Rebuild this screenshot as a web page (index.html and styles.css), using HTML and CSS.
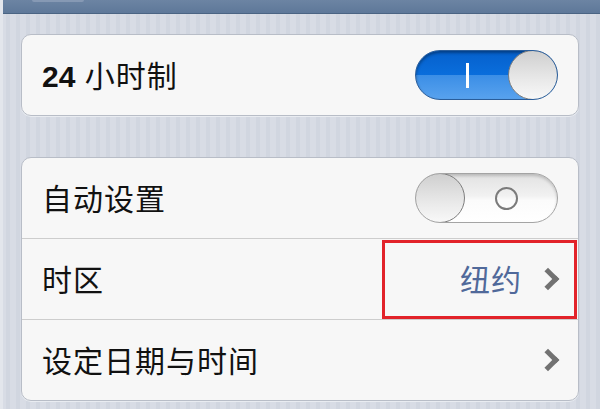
FILE: index.html
```html
<!DOCTYPE html>
<html lang="zh-CN">

<head>
    <meta charset="UTF-8">
    <meta name="viewport" content="width=device-width, initial-scale=1.0">
    <title>日期与时间</title>
    <link rel="stylesheet" href="styles.css">
</head>

<body>
    <!-- Navigation bar (cut off at the top) -->
    <div class="nav-bar">
        <span class="nav-btn"></span>
    </div>

    <div class="content">
        <!-- 24 hour group -->
        <div class="group">
            <div class="cell">
                <span class="label"><b>24</b> 小时制</span>
                <span class="switch on">
                    <span class="mark-on"></span>
                    <span class="knob"></span>
                </span>
            </div>
        </div>

        <!-- Time zone group -->
        <div class="group">
            <div class="cell">
                <span class="label">自动设置</span>
                <span class="switch off">
                    <span class="knob"></span>
                    <span class="mark-off"></span>
                </span>
            </div>
            <div class="cell">
                <span class="label">时区</span>
                <span class="detail">纽约</span>
                <span class="chevron"></span>
                <span class="highlight"></span>
            </div>
            <div class="cell">
                <span class="label">设定日期与时间</span>
                <span class="chevron"></span>
            </div>
        </div>
    </div>
</body>

</html>
```

FILE: styles.css
```css
body {
    margin: 0;
    width: 600px;
    height: 409px;
    overflow: hidden;
    font-family: "Liberation Sans", "Noto Sans CJK SC", sans-serif;
    background-color: #d5dae3;
    background-image: repeating-linear-gradient(90deg, #d8dce5 0, #d8dce5 6px, #d1d6e0 6px, #d1d6e0 10px);
    border-left: 3px solid #e3e6ec;
    box-sizing: border-box;
}

.nav-bar {
    height: 14px;
    background: linear-gradient(#6c84a3, #5e7899);
    border-bottom: 1px solid #4a6483;
    box-sizing: border-box;
    padding-left: 29px;
}

.nav-btn {
    display: block;
    width: 52px;
    height: 2px;
    background-color: #8699b4;
    border-radius: 0 0 4px 4px;
}

.content {
    padding: 20px 21px 0 18px;
    display: flex;
    flex-direction: column;
    gap: 41px;
}

.group {
    background-color: #f7f7f7;
    border: 1px solid #b8bdc7;
    border-radius: 10px;
    box-shadow: 0 1px 0 #e9ecf1;
}

.cell {
    position: relative;
    height: 80px;
    display: flex;
    align-items: center;
    padding: 0 20px 0 20px;
}

.cell + .cell {
    border-top: 1px solid #cdcdcd;
}

.label {
    flex: 1;
    font-size: 30px;
    color: #111;
    letter-spacing: 1px;
    margin-top: -2px;
}

.label b {
    font-weight: bold;
    letter-spacing: 0;
}

.detail {
    font-size: 30px;
    color: #50699a;
    letter-spacing: 1px;
    margin-right: 18px;
    margin-top: -2px;
}

.chevron {
    width: 11px;
    height: 11px;
    border-top: 5px solid #727272;
    border-right: 5px solid #727272;
    transform: rotate(45deg);
    margin-right: 2px;
}

.highlight {
    position: absolute;
    top: 1px;
    bottom: 0;
    right: 1px;
    width: 195px;
    border: 3px solid #e2232a;
    box-sizing: border-box;
}

/* switches */
.switch {
    position: relative;
    width: 143px;
    height: 50px;
    border-radius: 25px;
    box-sizing: border-box;
    border: 1px solid #8f8f8f;
    overflow: hidden;
}

.switch.on {
    background: linear-gradient(#0560cc 0%, #0a6edc 50%, #3b8ee6 50%, #58a2ee 100%);
    border-color: #2a5d9a;
    box-shadow: inset 0 2px 3px rgba(0, 0, 0, 0.35);
}

.switch.off {
    background: linear-gradient(#e2e2e2 0%, #f1f1f1 45%, #fbfbfb 55%, #ffffff 100%);
    border-color: #a4a4a4;
    box-shadow: inset 0 2px 3px rgba(0, 0, 0, 0.18);
}

.knob {
    position: absolute;
    top: -1px;
    width: 50px;
    height: 50px;
    border-radius: 50%;
    box-sizing: border-box;
    border: 1px solid #7d7d7d;
    background: linear-gradient(#cfcfcf, #e9e9e9 60%, #f8f8f8);
}

.switch.on .knob {
    right: -1px;
}

.switch.off .knob {
    left: -1px;
}

.mark-on {
    position: absolute;
    left: 50px;
    top: 12px;
    width: 3px;
    height: 25px;
    background-color: #fff;
}

.mark-off {
    position: absolute;
    left: 79px;
    top: 13px;
    width: 23px;
    height: 23px;
    border-radius: 50%;
    border: 2px solid #7b7b7b;
    box-sizing: border-box;
}
```
